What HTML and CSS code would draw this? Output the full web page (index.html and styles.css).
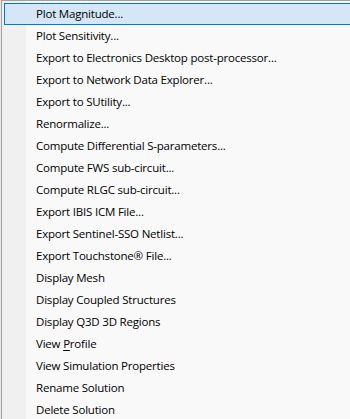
FILE: index.html
```html
<!DOCTYPE html>
<html>
<head>
<meta charset="utf-8">
<link rel="stylesheet" href="styles.css">
</head>
<body>
<div class="outside"></div>
<div class="menu">
  <div class="item active"><span>Plot Magnitude...</span></div>
  <div class="item"><span>Plot Sensitivity...</span></div>
  <div class="item"><span>Export to Electronics Desktop post-processor...</span></div>
  <div class="item"><span>Export to Network Data Explorer...</span></div>
  <div class="item"><span>Export to SUtility...</span></div>
  <div class="item"><span>Renormalize...</span></div>
  <div class="item"><span>Compute Differential S-parameters...</span></div>
  <div class="item"><span>Compute FWS sub-circuit...</span></div>
  <div class="item"><span>Compute RLGC sub-circuit...</span></div>
  <div class="item"><span>Export IBIS ICM File...</span></div>
  <div class="item"><span>Export Sentinel-SSO Netlist...</span></div>
  <div class="item"><span>Export Touchstone® File...</span></div>
  <div class="item"><span>Display Mesh</span></div>
  <div class="item"><span>Display Coupled Structures</span></div>
  <div class="item"><span>Display Q3D 3D Regions</span></div>
  <div class="item"><span>View <u>P</u>rofile</span></div>
  <div class="item"><span>View Simulation Properties</span></div>
  <div class="item"><span>Rename Solution</span></div>
  <div class="item"><span>Delete Solution</span></div>
</div>
</body>
</html>
```
FILE: styles.css
```css
html, body {
  margin: 0;
  padding: 0;
  background: #f0f0f0;
  overflow: hidden;
}
body {
  display: flex;
  width: 350px;
  height: 419px;
}
.outside {
  width: 1px;
  flex: none;
  background: #e8e8e8;
}
.menu {
  flex: 1;
  border-left: 1px solid #a0a0a0;
  border-top: 1px solid #a0a0a0;
  padding: 2px 0 0 2px;
  background: linear-gradient(to right, #f0f0f0 24px, #f9f9f9 24px);
  font-family: "Open Sans", "Segoe UI", sans-serif;
  font-size: 11.5px;
  letter-spacing: -0.2px;
  color: #000;
  display: flex;
  flex-direction: column;
}
.item {
  flex: none;
  height: 22px;
  box-sizing: border-box;
  display: flex;
  align-items: center;
  padding-left: 31px;
  padding-bottom: 1px;
  border: 1px solid transparent;
  white-space: nowrap;
}
.item.active {
  background: #d5e6f7;
  border-color: #0078d7;
  border-right: none;
}
.item u {
  text-decoration-thickness: 1px;
  text-underline-offset: 2px;
}
```
